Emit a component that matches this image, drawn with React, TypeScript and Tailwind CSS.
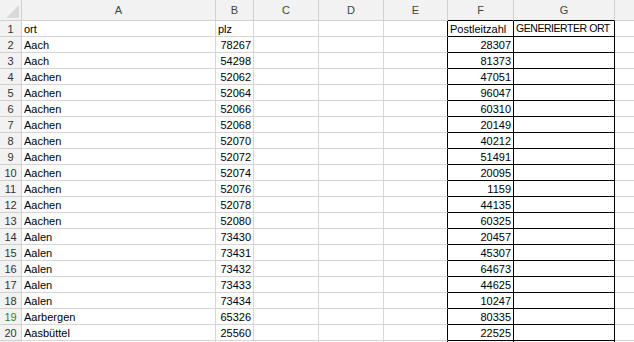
import React from "react";

const rows: [string, string, string][] = [
  ["Aach", "78267", "28307"],
  ["Aach", "54298", "81373"],
  ["Aachen", "52062", "47051"],
  ["Aachen", "52064", "96047"],
  ["Aachen", "52066", "60310"],
  ["Aachen", "52068", "20149"],
  ["Aachen", "52070", "40212"],
  ["Aachen", "52072", "51491"],
  ["Aachen", "52074", "20095"],
  ["Aachen", "52076", "1159"],
  ["Aachen", "52078", "44135"],
  ["Aachen", "52080", "60325"],
  ["Aalen", "73430", "20457"],
  ["Aalen", "73431", "45307"],
  ["Aalen", "73432", "64673"],
  ["Aalen", "73433", "44625"],
  ["Aalen", "73434", "10247"],
  ["Aarbergen", "65326", "80335"],
  ["Aasbüttel", "25560", "22525"],
];

const hdr =
  "h-[21px] bg-[#f2f2f2] border-r border-b border-[#d0d0d0] flex items-center justify-center text-[11px] text-[#444]";
const hdrBlackBottom =
  "h-[21px] bg-[#f2f2f2] border-r border-b border-[#d0d0d0] border-b-black flex items-center justify-center text-[11px] text-[#444]";
const rowHead =
  "h-[16px] bg-[#f2f2f2] border-r border-b border-[#d0d0d0] flex items-center justify-center pt-[1px] text-[11px] text-[#333]";
const rowHeadGreen =
  "h-[16px] bg-[#f2f2f2] border-r border-b border-[#d0d0d0] flex items-center justify-center pt-[1px] text-[11px] text-[#2f7d3a]";
const cellL =
  "h-[16px] border-r border-b border-[#d6d6d6] flex items-center px-[2px] pt-[1px] text-[11px] text-black whitespace-nowrap";
const cellR =
  "h-[16px] border-r border-b border-[#d6d6d6] flex items-center justify-end px-[2px] pt-[1px] text-[11px] text-black whitespace-nowrap";
const cellE = "h-[16px] border-r border-b border-[#d6d6d6] border-r-black";
const cellPlain = "h-[16px] border-r border-b border-[#d6d6d6]";
const cellFL =
  "h-[16px] border-r border-b border-black flex items-center px-[2px] pt-[1px] text-[11px] text-black whitespace-nowrap";
const cellFR =
  "h-[16px] border-r border-b border-black flex items-center justify-end px-[2px] pt-[1px] text-[11px] text-black whitespace-nowrap";
const cellG = "h-[16px] border-r border-b border-black";
const cellH = "h-[16px] border-b border-[#d6d6d6]";

export default function App() {
  const allRows: { n: number; a: string; b: string; f: string; g: string }[] = [
    { n: 1, a: "ort", b: "plz", f: "Postleitzahl", g: "GENERIERTER ORT" },
    ...rows.map((r, i) => ({ n: i + 2, a: r[0], b: r[1], f: r[2], g: "" })),
    { n: 21, a: "", b: "", f: "", g: "" },
  ];
  return (
    <div
      className="w-[634px] h-[342px] overflow-hidden bg-white"
      style={{ fontFamily: '"Liberation Sans", Arial, sans-serif' }}
    >
      <div className="grid grid-cols-[22px_194px_38px_65px_65px_64px_66px_101px_1fr]">
        <div className="h-[21px] bg-[#f2f2f2] border-r border-b border-[#d0d0d0] relative">
          <svg className="absolute left-0 top-0" width="21" height="20" viewBox="0 0 21 20">
            <polygon points="19,5 19,18 6,18" fill="#d9d9d9" />
          </svg>
        </div>
        <div className={hdr}>A</div>
        <div className={hdr}>B</div>
        <div className={hdr}>C</div>
        <div className={hdr}>D</div>
        <div className={hdr}>E</div>
        <div className={hdrBlackBottom}>F</div>
        <div className={hdrBlackBottom}>G</div>
        <div className="h-[21px] bg-[#f2f2f2] border-b border-[#d0d0d0]"></div>

        {allRows.map((r) => {
          const isHeaderRow = r.n === 1;
          const isNum = !isHeaderRow;
          return (
            <React.Fragment key={r.n}>
              <div className={r.n === 19 ? rowHeadGreen : rowHead}>{r.n === 21 ? "" : r.n}</div>
              <div className={cellL}>{r.a}</div>
              <div className={isNum ? cellR : cellL}>{r.b}</div>
              <div className={cellPlain}></div>
              <div className={cellPlain}></div>
              <div className={cellE}></div>
              <div className={isNum ? cellFR : cellFL}>{r.f}</div>
              <div className={cellG}>
                {isHeaderRow ? (
                  <div className="h-full flex items-center px-[2px] pt-[1px] text-[10.5px] text-black whitespace-nowrap tracking-[-0.45px]">
                    {r.g}
                  </div>
                ) : null}
              </div>
              <div className={cellH}></div>
            </React.Fragment>
          );
        })}
      </div>
    </div>
  );
}
